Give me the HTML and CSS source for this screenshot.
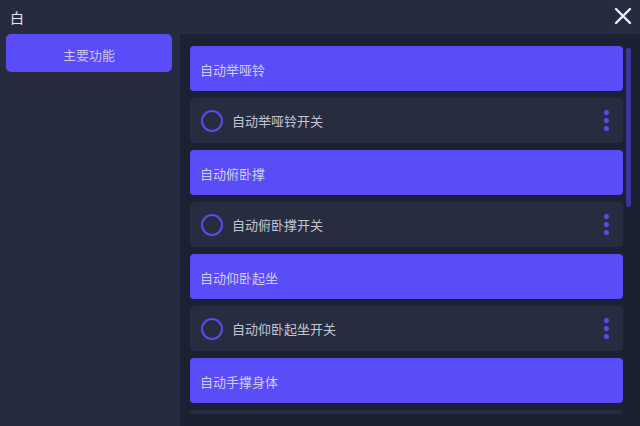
FILE: index.html
```html
<!DOCTYPE html>
<html lang="zh">
<head>
<meta charset="utf-8">
<link rel="stylesheet" href="styles.css">
</head>
<body>
<div class="app">
  <header class="topbar">
    <span class="title">白</span>
    <svg class="close" width="18" height="18" viewBox="0 0 18 18"><path d="M2 2 L16 16 M16 2 L2 16" stroke="#eef0f6" stroke-width="2.4" stroke-linecap="round"/></svg>
  </header>
  <div class="body">
    <aside class="sidebar">
      <div class="nav-btn">主要功能</div>
    </aside>
    <main class="panel">
      <div class="list">
        <div class="header-item">自动举哑铃</div>
        <div class="row"><span class="ring"></span><span class="label">自动举哑铃开关</span><span class="dots"><i></i><i></i><i></i></span></div>
        <div class="header-item">自动俯卧撑</div>
        <div class="row"><span class="ring"></span><span class="label">自动俯卧撑开关</span><span class="dots"><i></i><i></i><i></i></span></div>
        <div class="header-item">自动仰卧起坐</div>
        <div class="row"><span class="ring"></span><span class="label">自动仰卧起坐开关</span><span class="dots"><i></i><i></i><i></i></span></div>
        <div class="header-item">自动手撑身体</div>
        <div class="row"><span class="ring"></span><span class="label">自动手撑身体开关</span><span class="dots"><i></i><i></i><i></i></span></div>
      </div>
      <div class="scrollbar"></div>
    </main>
  </div>
</div>
</body>
</html>
```
FILE: styles.css
```css
* { box-sizing: border-box; }
html, body { margin: 0; padding: 0; }
body {
  width: 640px; height: 426px; overflow: hidden;
  background: #262b3f;
  font-family: "Noto Sans CJK SC", "Noto Sans", sans-serif;
}
.app { display: flex; flex-direction: column; height: 426px; }
.topbar {
  height: 34px; flex: none;
  display: flex; align-items: center; justify-content: space-between;
  padding: 0 8px 0 10px;
}
.title { color: #e6e8f0; font-size: 14px; line-height: 1; margin-top: -1px; }
.close { margin-top: -2px; }
.body { flex: 1; display: flex; min-height: 0; }
.sidebar { width: 180px; flex: none; padding: 0 8px 0 6px; }
.nav-btn {
  height: 38px; border-radius: 5px;
  background: #5a4cf6;
  color: #c9c6f0; font-size: 13px;
  display: flex; align-items: center; justify-content: center;
  padding-top: 3px;
}
.panel {
  flex: 1; position: relative; overflow: hidden;
  background: #1c2033;
  padding: 12px 17px 12px 10px;
  display: flex; flex-direction: column;
}
.list {
  flex: 1; min-height: 0; overflow: hidden;
  display: flex; flex-direction: column; gap: 7px;
}
.header-item {
  height: 45px; flex: none; border-radius: 4px;
  background: #5a4cf6;
  color: #cfcdf2; font-size: 13px;
  display: flex; align-items: center;
  padding: 2px 0 0 10px;
}
.row {
  height: 45px; flex: none; border-radius: 4px;
  background: #272c40;
  display: flex; align-items: center;
  padding: 0 14px 0 11px;
}
.ring {
  width: 22px; height: 22px; border-radius: 50%;
  border: 2.5px solid #5a4de8; flex: none;
}
.label { flex: 1; color: #c3c6d3; font-size: 13px; margin-left: 9px; padding-bottom: 1px; }
.dots { display: flex; flex-direction: column; gap: 3px; }
.dots i { display: block; width: 5px; height: 5px; border-radius: 50%; background: #5a4de8; }
.scrollbar {
  position: absolute; left: 446px; top: 14px;
  width: 5px; height: 159px; border-radius: 3px;
  background: #3b379a;
}
```
